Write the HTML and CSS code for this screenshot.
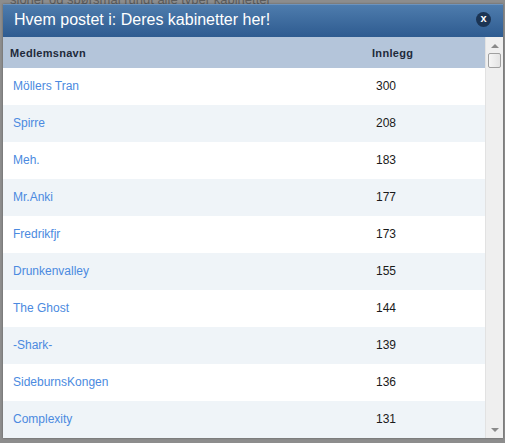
FILE: index.html
```html
<!DOCTYPE html>
<html>
<head>
<meta charset="utf-8">
<link rel="stylesheet" href="styles.css">
</head>
<body>
<div class="page">
  <p class="page-text">sjoner og spørsmål rundt alle typer kabinetter</p>
</div>
<div class="dialog">
  <div class="titlebar">
    <span class="title">Hvem postet i: Deres kabinetter her!</span>
    <span class="close">x</span>
  </div>
  <div class="body">
    <div class="table">
      <div class="row head"><span class="name">Medlemsnavn</span><span class="count">Innlegg</span></div>
      <div class="row"><a class="name">Möllers Tran</a><span class="count">300</span></div>
      <div class="row alt"><a class="name">Spirre</a><span class="count">208</span></div>
      <div class="row"><a class="name">Meh.</a><span class="count">183</span></div>
      <div class="row alt"><a class="name">Mr.Anki</a><span class="count">177</span></div>
      <div class="row"><a class="name">Fredrikfjr</a><span class="count">173</span></div>
      <div class="row alt"><a class="name">Drunkenvalley</a><span class="count">155</span></div>
      <div class="row"><a class="name">The Ghost</a><span class="count">144</span></div>
      <div class="row alt"><a class="name">-Shark-</a><span class="count">139</span></div>
      <div class="row"><a class="name">SideburnsKongen</a><span class="count">136</span></div>
      <div class="row alt"><a class="name">Complexity</a><span class="count">131</span></div>
    </div>
    <div class="scrollbar">
      <span class="arrow up"></span>
      <span class="thumb"></span>
      <span class="track"></span>
      <span class="arrow down"></span>
    </div>
  </div>
</div>
</body>
</html>
```
FILE: styles.css
```css
html, body {
  margin: 0;
  padding: 0;
  width: 505px;
  height: 443px;
  overflow: hidden;
  background: #8d8d8d;
  font-family: "Liberation Sans", Arial, sans-serif;
}
.page {
  padding: 0 0 0 10px;
}
.page-text {
  margin: 0;
  margin-top: -8px;
  font-size: 13px;
  color: #5c5c5c;
  line-height: 16px;
}
.dialog {
  position: absolute;
  left: 3px;
  top: 4px;
  width: 500px;
  height: 434px;
  display: flex;
  flex-direction: column;
  background: #fff;
  box-shadow: 0 0 2px rgba(0,0,0,0.35);
}
.titlebar {
  height: 33px;
  flex: none;
  box-sizing: border-box;
  display: flex;
  align-items: center;
  justify-content: space-between;
  padding: 0 12px 2px 11px;
  background: linear-gradient(#4e7cad, #2e5b90);
  border-top: 1px solid #6d93bd;
}
.title {
  color: #fff;
  font-size: 16px;
  line-height: 20px;
}
.close {
  width: 15px;
  height: 15px;
  border-radius: 50%;
  background: #1b3454;
  color: #fff;
  font-size: 11px;
  font-weight: bold;
  line-height: 13px;
  text-align: center;
  margin-top: -1px;
}
.body {
  flex: 1;
  display: flex;
  min-height: 0;
}
.table {
  flex: 1;
  display: flex;
  flex-direction: column;
}
.row {
  height: 37px;
  display: flex;
  align-items: center;
  background: #fff;
  font-size: 12px;
  padding-bottom: 2px;
  box-sizing: border-box;
}
.row.alt {
  background: #eff4f8;
}
.row.head {
  height: 31px;
  background: #b4c5da;
  font-size: 11px;
  font-weight: bold;
  letter-spacing: 0.3px;
  color: #222;
  padding-top: 1px;
  padding-bottom: 0;
}
.name {
  width: 363px;
  padding-left: 10px;
  color: #4b8ae0;
}
.head .name {
  padding-left: 7px;
  width: 362px;
  color: #1e2a3a;
}
.count {
  color: #1a1a1a;
}
.head .count {
  color: #1e2a3a;
}
.scrollbar {
  width: 17px;
  flex: none;
  background: #efefef;
  border-left: 1px solid #e2e2e2;
  display: flex;
  flex-direction: column;
  align-items: center;
}
.arrow {
  width: 0;
  height: 0;
  border-left: 4px solid transparent;
  border-right: 4px solid transparent;
  flex: none;
}
.arrow.up {
  margin-top: 7px;
  border-bottom: 4px solid #8a8a8a;
}
.arrow.down {
  margin-bottom: 6px;
  border-top: 4px solid #8a8a8a;
}
.thumb {
  margin-top: 5px;
  width: 13px;
  height: 15px;
  box-sizing: border-box;
  border: 1px solid #a0a0a0;
  border-radius: 2px;
  background: linear-gradient(90deg, #f6f6f6, #e4e4e4);
  flex: none;
}
.track {
  flex: 1;
}
```
